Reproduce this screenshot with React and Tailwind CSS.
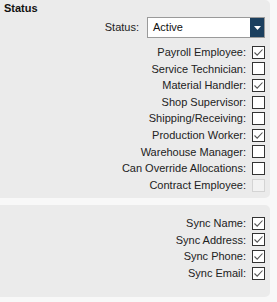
const roles = [
  { label: 'Payroll Employee:', checked: true },
  { label: 'Service Technician:', checked: false },
  { label: 'Material Handler:', checked: true },
  { label: 'Shop Supervisor:', checked: false },
  { label: 'Shipping/Receiving:', checked: false },
  { label: 'Production Worker:', checked: true },
  { label: 'Warehouse Manager:', checked: false },
  { label: 'Can Override Allocations:', checked: false },
  { label: 'Contract Employee:', checked: false, disabled: true },
];

const syncs = [
  { label: 'Sync Name:', checked: true },
  { label: 'Sync Address:', checked: true },
  { label: 'Sync Phone:', checked: true },
  { label: 'Sync Email:', checked: true },
];

const Box = ({ checked, disabled }) => (
  <span
    className={`w-[13px] h-[13px] flex items-center justify-center border ${
      disabled ? 'border-[#d4d4d4] bg-[#f2f2f2]' : 'border-[#333] bg-white'
    }`}
  >
    {checked && (
      <svg width="11" height="11" viewBox="0 0 11 11">
        <path d="M1.5 5.5 L4.2 8.2 L9.5 2.5" fill="none" stroke="#555" strokeWidth="1.1" />
      </svg>
    )}
  </span>
);

const Row = ({ label, checked, disabled }) => (
  <div className="flex items-center justify-end h-[16.6px] gap-[6px]">
    <span className="text-[11px] text-[#222]">{label}</span>
    <Box checked={checked} disabled={disabled} />
  </div>
);

export default function App() {
  return (
    <div className="w-[277px] h-[302px] bg-[#f8f8f8] font-['Liberation_Sans',Arial,sans-serif] overflow-hidden">
      <div className="w-[270px] h-[198px] bg-[#ebebeb] rounded-r-[5px] pr-[5px]">
        <div className="text-[11px] font-bold text-[#111] pl-[4px] pt-[1px] leading-[14px]">Status</div>
        <div className="flex items-center justify-end gap-[8px] mt-[2px] h-[21px]">
          <span className="text-[11px] text-[#222]">Status:</span>
          <div className="w-[118px] h-[21px] bg-white border border-[#9a9a9a] flex items-center">
            <span className="flex-1 text-[11px] text-[#111] pl-[5px]">Active</span>
            <span className="w-[14px] h-full bg-[#1b3f5e] flex items-center justify-center">
              <svg width="7" height="4" viewBox="0 0 7 4">
                <path d="M0 0 H7 L3.5 4 Z" fill="white" />
              </svg>
            </span>
          </div>
        </div>
        <div className="mt-[6px]">
          {roles.map((r) => (
            <Row key={r.label} {...r} />
          ))}
        </div>
      </div>
      <div className="w-[270px] h-[92px] bg-[#ebebeb] rounded-r-[5px] mt-[7px] pr-[5px] pt-[10px]">
        {syncs.map((r) => (
          <Row key={r.label} {...r} />
        ))}
      </div>
    </div>
  );
}
